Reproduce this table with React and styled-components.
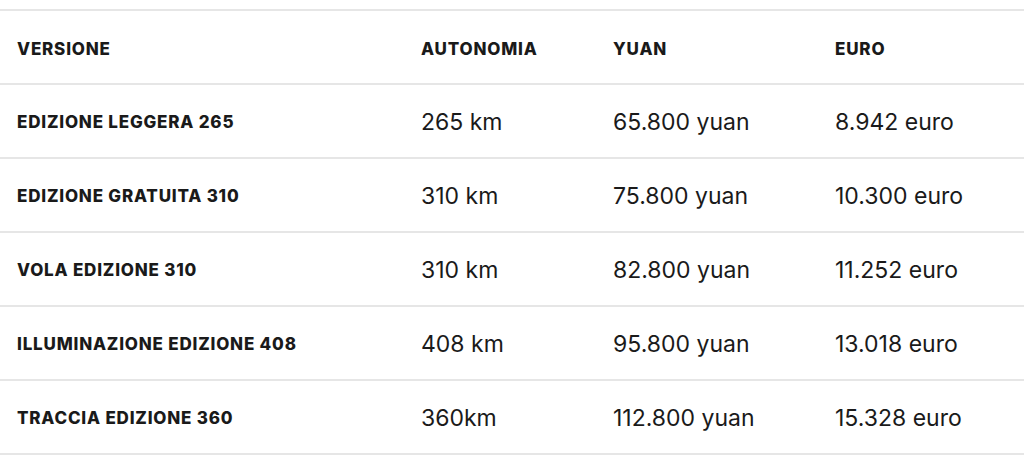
import React from "react";
import styled, { createGlobalStyle } from "styled-components";

const Global = createGlobalStyle`
  html, body { margin: 0; padding: 0; background: #ffffff; }
  body { font-family: Inter, "Noto Sans", sans-serif; color: #1a1a1a; }
`;

const Wrap = styled.div`
  padding-top: 9px;
`;

const Table = styled.table`
  width: 100%;
  table-layout: fixed;
  border-collapse: collapse;
  border-top: 2px solid #e6e6e6;
`;

const Col = styled.col`
  width: ${(p) => (p.$w ? `${p.$w}px` : "auto")};
`;

const Row = styled.tr`
  height: 74px;
  border-bottom: 2px solid #e6e6e6;
`;

const Head = styled.th`
  text-align: left;
  font-weight: 800;
  font-size: 17px;
  letter-spacing: 0.8px;
  text-transform: uppercase;
  padding: 3px 0 0 ${(p) => p.$pl || 0}px;
  color: #1a1a1a;
`;

const Name = styled.td`
  font-weight: 800;
  font-size: 17px;
  letter-spacing: 0.8px;
  padding: 2px 0 0 17px;
  color: #1a1a1a;
  white-space: nowrap;
`;

const Cell = styled.td`
  font-size: 23px;
  font-weight: 400;
  color: #1a1a1a;
  padding: 2px 0 0 0;
  white-space: nowrap;
`;

const rows = [
  ["EDIZIONE LEGGERA 265", "265 km", "65.800 yuan", "8.942 euro"],
  ["EDIZIONE GRATUITA 310", "310 km", "75.800 yuan", "10.300 euro"],
  ["VOLA EDIZIONE 310", "310 km", "82.800 yuan", "11.252 euro"],
  ["ILLUMINAZIONE EDIZIONE 408", "408 km", "95.800 yuan", "13.018 euro"],
  ["TRACCIA EDIZIONE 360", "360km", "112.800 yuan", "15.328 euro"],
];

export default function App() {
  return (
    <>
      <Global />
      <Wrap>
        <Table>
          <colgroup>
            <Col $w={421} />
            <Col $w={192} />
            <Col $w={222} />
            <Col />
          </colgroup>
          <thead>
            <Row>
              <Head $pl={17}>Versione</Head>
              <Head>Autonomia</Head>
              <Head>Yuan</Head>
              <Head>Euro</Head>
            </Row>
          </thead>
          <tbody>
            {rows.map((r) => (
              <Row key={r[0]}>
                <Name>{r[0]}</Name>
                <Cell>{r[1]}</Cell>
                <Cell>{r[2]}</Cell>
                <Cell>{r[3]}</Cell>
              </Row>
            ))}
          </tbody>
        </Table>
      </Wrap>
    </>
  );
}
